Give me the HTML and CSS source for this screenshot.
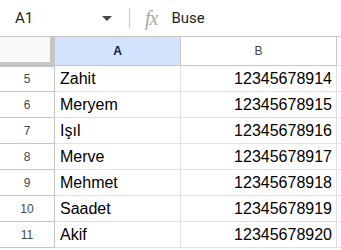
FILE: index.html
```html
<!DOCTYPE html>
<html>
<head>
<meta charset="utf-8">
<link rel="stylesheet" href="styles.css">
</head>
<body>
<div class="formula-bar">
  <div class="namebox">A1</div>
  <svg class="caret" width="10" height="5" viewBox="0 0 10 5"><path d="M0 0h10L5 5z" fill="#444746"/></svg>
  <div class="divider"></div>
  <span class="fx">fx</span>
  <span class="formula">Buse</span>
</div>
<div class="grid">
  <div class="corner"></div>
  <div class="colhead sel">A</div>
  <div class="colhead">B</div>
  <div class="rest head-rest"></div>

  <div class="rownum">5</div><div class="cell">Zahit</div><div class="cell num">12345678914</div><div class="rest"></div>
  <div class="rownum">6</div><div class="cell">Meryem</div><div class="cell num">12345678915</div><div class="rest"></div>
  <div class="rownum">7</div><div class="cell">Işıl</div><div class="cell num">12345678916</div><div class="rest"></div>
  <div class="rownum">8</div><div class="cell">Merve</div><div class="cell num">12345678917</div><div class="rest"></div>
  <div class="rownum">9</div><div class="cell">Mehmet</div><div class="cell num">12345678918</div><div class="rest"></div>
  <div class="rownum">10</div><div class="cell">Saadet</div><div class="cell num">12345678919</div><div class="rest"></div>
  <div class="rownum">11</div><div class="cell">Akif</div><div class="cell num">12345678920</div><div class="rest"></div>
</div>
</body>
</html>
```
FILE: styles.css
```css
html, body {
  margin: 0;
  padding: 0;
  background: #fff;
  font-family: Roboto, "Liberation Sans", Arial, sans-serif;
  overflow: hidden;
}
.formula-bar {
  display: flex;
  align-items: center;
  border-bottom: 1px solid #c4c7c5;
  box-sizing: border-box;
  height: 37px;
}
.namebox {
  width: 84px;
  padding-left: 15px;
  font-size: 15px;
  color: #1f1f1f;
}
.caret {
  margin-left: 3px;
}
.divider {
  width: 1px;
  height: 20px;
  background: #c7c7c7;
  margin-left: 17px;
}
.fx {
  margin-left: 15px;
  font-family: "Liberation Serif", "Times New Roman", serif;
  font-style: italic;
  font-size: 20px;
  color: #a8a8a8;
  letter-spacing: -1px;
}
.formula {
  margin-left: 14px;
  font-size: 15px;
  color: #1f1f1f;
}
.grid {
  display: grid;
  grid-template-columns: 55px 126px 156px 1fr;
  grid-template-rows: 29px repeat(7, 26px);
}
.corner {
  background: #f8f9fa;
  border-right: 5px solid #c4c7c5;
  border-bottom: 5px solid #c4c7c5;
  box-sizing: border-box;
  margin-bottom: -1px;
}
.colhead {
  border-right: 1px solid #c4c7c5;
  border-bottom: 1px solid #c4c7c5;
  box-sizing: border-box;
  display: flex;
  align-items: center;
  justify-content: center;
  font-family: "Liberation Sans", Arial, sans-serif;
  font-size: 12px;
  color: #444746;
  padding-bottom: 1px;
}
.colhead.sel {
  background: #d3e3fd;
  color: #0b1d3a;
  font-weight: bold;
}
.head-rest {
  border-bottom: 1px solid #c4c7c5;
}
.rownum {
  border-right: 1px solid #c4c7c5;
  border-bottom: 1px solid #c4c7c5;
  box-sizing: border-box;
  display: flex;
  align-items: center;
  justify-content: center;
  font-family: "Liberation Sans", Arial, sans-serif;
  font-size: 12px;
  color: #444746;
}
.cell {
  border-right: 1px solid #e1e1e1;
  border-bottom: 1px solid #e1e1e1;
  box-sizing: border-box;
  display: flex;
  align-items: center;
  padding: 0 4px 0 5px;
  font-family: "Liberation Sans", Arial, sans-serif;
  font-size: 16px;
  color: #000;
  white-space: nowrap;
}
.cell.num {
  justify-content: flex-end;
}
.rest {
  border-bottom: 1px solid #e1e1e1;
}
```
